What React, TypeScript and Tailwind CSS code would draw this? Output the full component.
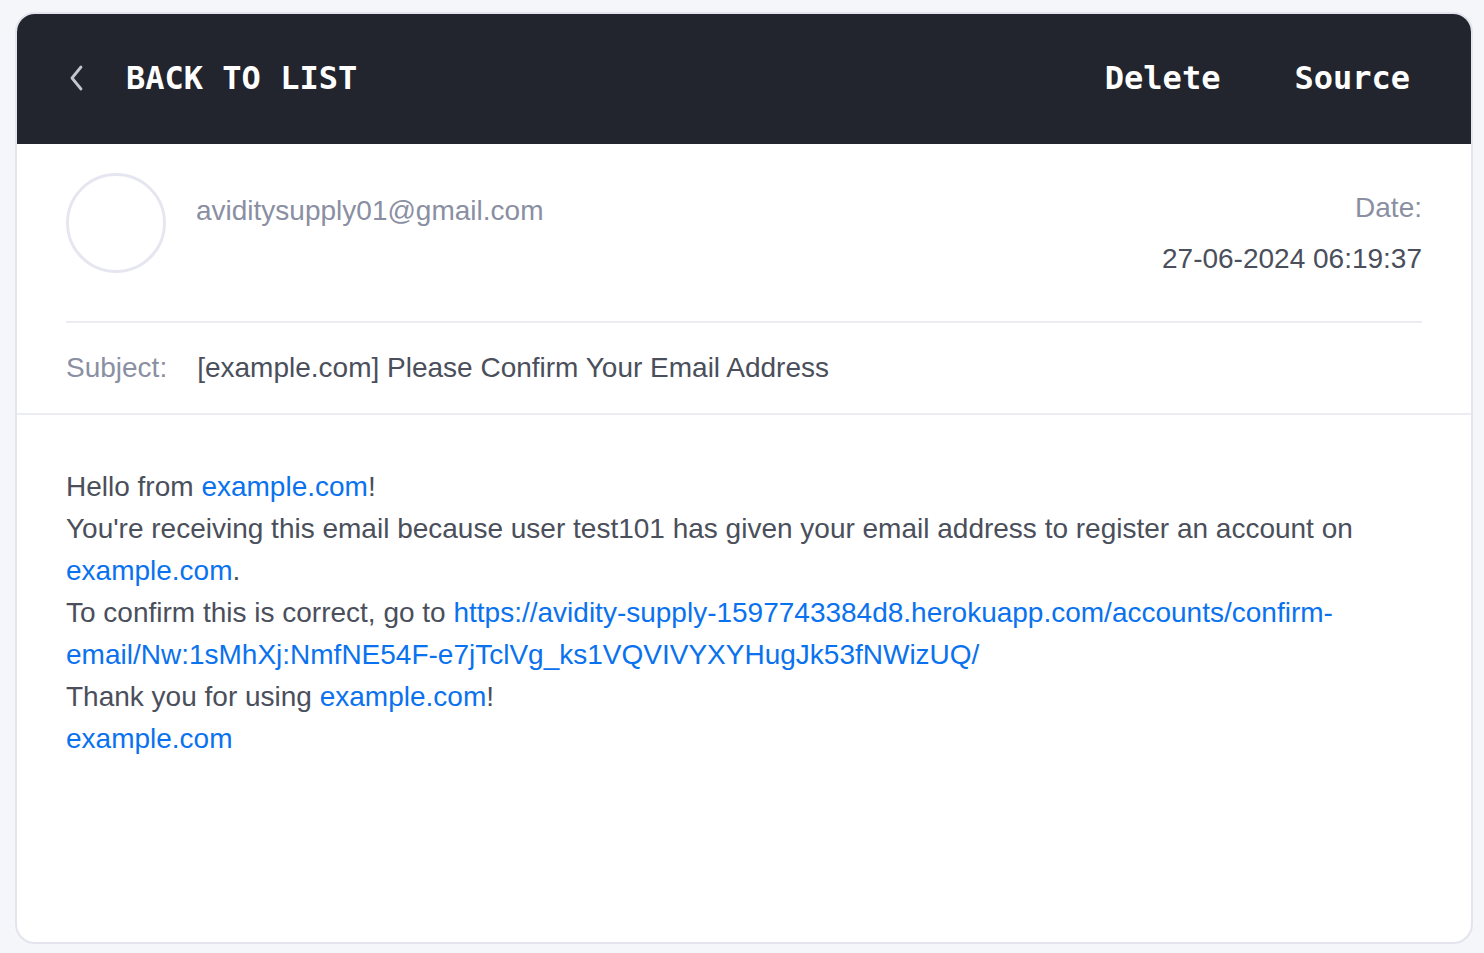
// Email detail view: dark header bar, sender block, subject, body.

const mono = "font-['DejaVu_Sans_Mono',Menlo,monospace]";
const sans = "font-['Liberation_Sans',Helvetica,Arial,sans-serif]";

function Link({ children }: { children: React.ReactNode }) {
  return <a className="text-[#0a72ee]">{children}</a>;
}

export default function App() {
  return (
    <div className={`min-h-[953px] bg-[#f5f6f9] pt-[12px] pl-[15px] ${sans}`}>
      <div className="flex h-[932px] w-[1458px] flex-col overflow-hidden rounded-[20px] border-2 border-[#e4e4ef] bg-white">
        {/* header bar */}
        <header className="flex h-[130px] shrink-0 items-center justify-between bg-[#22252d] pb-[3px] pl-[50px] pr-[61px]">
          <div className="flex items-center gap-[41px]">
            <svg width="18" height="28" viewBox="0 0 18 28" fill="none">
              <polyline
                points="14,3 5,14 14,25"
                stroke="#c3c5cf"
                strokeWidth="2.8"
                strokeLinecap="round"
                strokeLinejoin="round"
              />
            </svg>
            <span className={`${mono} text-[32px] font-bold text-white`}>
              BACK TO LIST
            </span>
          </div>
          <div className={`flex items-center gap-[74px] ${mono} text-[32px] font-bold text-white`}>
            <button type="button">Delete</button>
            <button type="button">Source</button>
          </div>
        </header>

        {/* sender */}
        <section className="px-[49px]">
          <div className="flex items-start justify-between border-b-2 border-[#ececf3] pt-[29px] pb-[41px]">
            <div className="flex items-start gap-[30px]">
              <div className="h-[100px] w-[100px] rounded-full border-[3px] border-[#e6e6f1]" />
              <p className="pt-[17px] text-[28px] leading-[42px] text-[#8a8fa3]">
                aviditysupply01@gmail.com
              </p>
            </div>
            <div className="pt-[14px] text-right text-[28px] leading-[42px]">
              <p className="text-[#8a8fa3]">Date:</p>
              <p className="mt-[9px] text-[#4a4f5b]">27-06-2024 06:19:37</p>
            </div>
          </div>
          <div className="flex gap-[30px] py-[24px] text-[28px] leading-[42px]">
            <span className="text-[#8a8fa3]">Subject:</span>
            <span className="text-[#4a4f5b]">
              [example.com] Please Confirm Your Email Address
            </span>
          </div>
        </section>

        {/* body */}
        <section className="border-t-2 border-[#ececf3] px-[49px] pt-[51px] text-[28px] leading-[42px] text-[#4a4f5b]">
          <p>
            Hello from <Link>example.com</Link>!
            <br />
            You're receiving this email because user test101 has given your
            email address to register an account on <Link>example.com</Link>.
            <br />
            To confirm this is correct, go to{" "}
            <Link>
              https://avidity-supply-1597743384d8.herokuapp.com/accounts/confirm-email/Nw:1sMhXj:NmfNE54F-e7jTclVg_ks1VQVIVYXYHugJk53fNWizUQ/
            </Link>
            <br />
            Thank you for using <Link>example.com</Link>!
            <br />
            <Link>example.com</Link>
          </p>
        </section>
      </div>
    </div>
  );
}
